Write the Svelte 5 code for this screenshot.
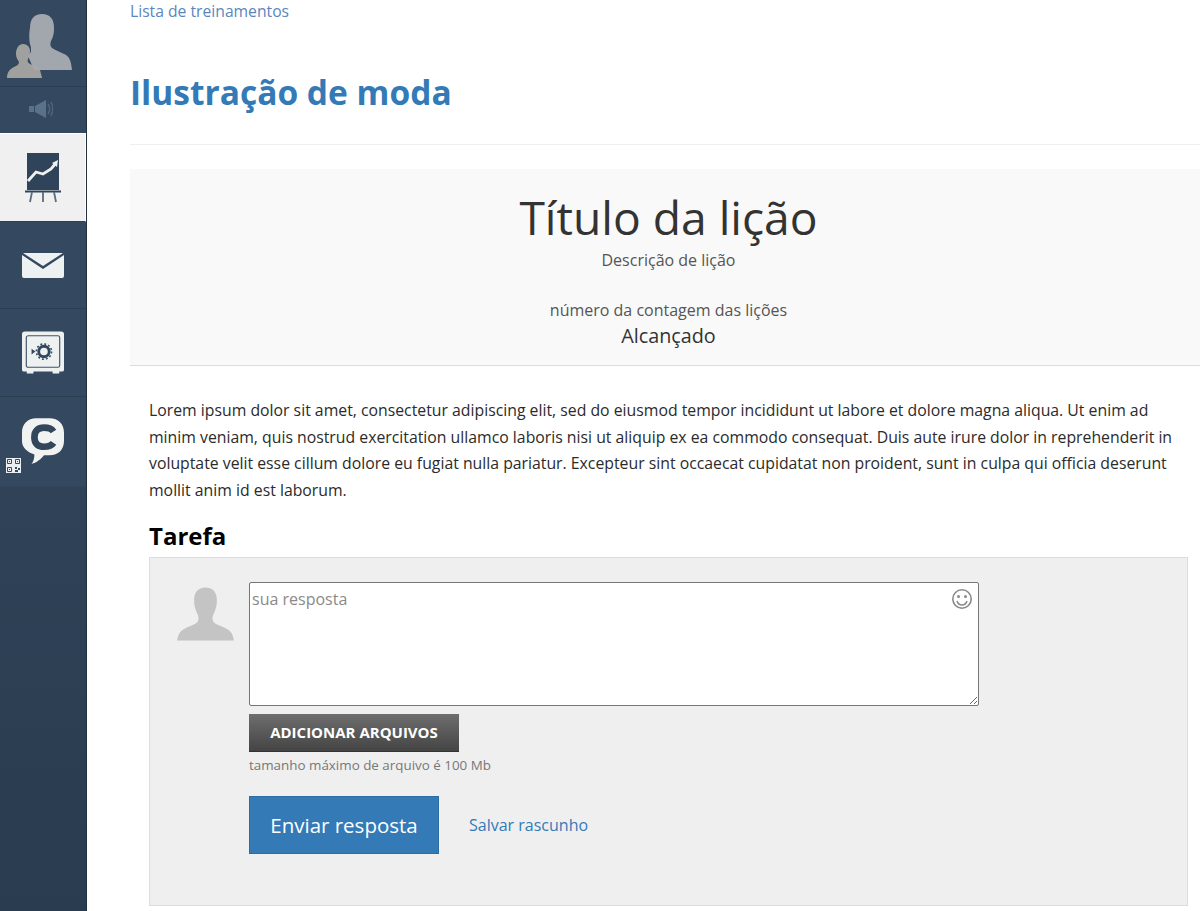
<script>
  let answer = $state("");
  const lesson = {
    course: "Ilustração de moda",
    title: "Título da lição",
    description: "Descrição de lição",
    countLabel: "número da contagem das lições",
    status: "Alcançado",
  };
</script>

<div class="page">
  <nav class="side">
    <div class="item avatar">
      <svg width="86" height="86" viewBox="0 0 86 86">
        <path fill="#a2a7ad" d="M30 28c0-9 4-14 12-14s12 5 12 14c0 6-1 9-3 13-1 3-1 5 1 7 3 2 8 4 12 6 5 2 7 6 8 16H34l-6-14c1-2 3-3 3-5 0-3 0-4-1-7-1-4-1-11 0-16z"/>
        <path fill="#a9a9a4" fill-opacity=".92" d="M23 44c4 0 7 3 7 7 0 3-1 6-2 8-1 2 0 4 2 5 4 2 8 3 10 6l2 8H7c0-6 3-9 7-11 3-1 5-3 5-5-1-2-3-4-3-8 0-6 3-10 7-10z"/>
      </svg>
    </div>
    <div class="item sound">
      <svg width="30" height="22" viewBox="0 0 30 22">
        <path fill="#5a718a" d="M1 8h5v6H1zM7 8l11-6v18L7 14z"/>
        <path fill="none" stroke="#4f667f" stroke-width="1.500" d="M20 6c2 3 2 7 0 10M23 4c2 4 2 10 0 14"/>
      </svg>
    </div>
    <div class="item active">
      <svg width="36" height="52" viewBox="0 0 36 52">
        <rect x="2" y="1" width="32" height="37" fill="#2f445a"/>
        <path fill="none" stroke="#f0f0f0" stroke-width="2.800" d="M3 29l8-9 7 2 8-5 5-6"/>
        <path fill="#f0f0f0" d="M33 8l-1 7-5-4z"/>
        <path fill="none" stroke="#2f445a" stroke-width="2" d="M0 39.500h36"/>
        <path fill="none" stroke="#5c6c7c" stroke-width="1.800" d="M7 40l-2 10M18 40v10M29 40l2 10"/>
      </svg>
    </div>
    <div class="item">
      <svg width="42" height="26" viewBox="0 0 42 26">
        <path fill="#eef1f2" d="M1 1h40L21 14z"/>
        <path fill="#eef1f2" d="M0 3l21 14L42 3v21a2 2 0 0 1-2 2H2a2 2 0 0 1-2-2z"/>
      </svg>
    </div>
    <div class="item safe">
      <svg width="42" height="43" viewBox="0 0 44 44">
        <path fill="#eef1f2" d="M3 0h38a3 3 0 0 1 3 3v37a2 2 0 0 1-2 2h-3v2h-7v-2H12v2H5v-2H2a2 2 0 0 1-2-2V3a3 3 0 0 1 3-3z"/>
        <rect x="4.500" y="4.500" width="35" height="33" rx="2" fill="#eef1f2" stroke="#3f5368" stroke-width="1.200"/>
        <circle cx="23" cy="21" r="5.500" fill="none" stroke="#33475c" stroke-width="3"/>
        <circle cx="23" cy="21" r="8" fill="none" stroke="#33475c" stroke-width="1.600" stroke-dasharray="2 2.200"/>
        <path fill="#33475c" d="M10 18l4 3-4 3z"/>
      </svg>
    </div>
    <div class="item chat">
      <svg width="42" height="48" viewBox="0 0 44 50">
        <path fill="#f1f3f3" fill-rule="evenodd" d="M15 0h14c9 0 15 6 15 15v9c0 9-6 15-15 15h-6c-3 4-8 8-13 9 2-3 3-6 3-10C6 36 0 31 0 24v-9C0 6 6 0 15 0z"/>
        <path fill="none" stroke="#33475c" stroke-width="7" d="M33 14c-2-3-5-4-10-4-6 0-10 3-10 10s4 10 10 10c5 0 8-1 10-4"/>
      </svg>
      <svg class="qr" width="15" height="15" viewBox="0 0 15 15">
        <rect width="15" height="15" fill="#e8eef2"/>
        <path fill="none" stroke="#34495f" stroke-width="1" d="M1.500 1.500h4v4h-4zM9.500 1.500h4v4h-4zM1.500 9.500h4v4h-4z"/>
        <path fill="#34495f" d="M3 3h1v1H3zM11 3h1v1h-1zM3 11h1v1H3zM9 9h2v2H9zM12 10h2v2h-2zM9 12h3v2H9z"/>
      </svg>
    </div>
  </nav>

  <main>
    <a class="crumb" href="#lista">Lista de treinamentos</a>
    <h1>{lesson.course}</h1>

    <header class="lesson">
      <h2>{lesson.title}</h2>
      <p class="desc">{lesson.description}</p>
      <p class="count">{lesson.countLabel}</p>
      <p class="status">{lesson.status}</p>
    </header>

    <section class="body">
      <p class="text">Lorem ipsum dolor sit amet, consectetur adipiscing elit, sed do eiusmod tempor incididunt ut labore et dolore magna aliqua. Ut enim ad minim veniam, quis nostrud exercitation ullamco laboris nisi ut aliquip ex ea commodo consequat. Duis aute irure dolor in reprehenderit in voluptate velit esse cillum dolore eu fugiat nulla pariatur. Excepteur sint occaecat cupidatat non proident, sunt in culpa qui officia deserunt mollit anim id est laborum.</p>
      <h3>Tarefa</h3>

      <div class="task">
        <svg class="person" width="57" height="56" viewBox="0 0 60 56">
          <path fill="#c4c4c4" d="M18 14C18 5 22 0 30 0s12 5 12 14c0 6-2 11-4 15-1 3-1 6 1 8 3 3 9 4 14 7 4 2 6 6 7 12H0c1-6 3-10 7-12 5-3 11-4 14-7 2-2 2-5 1-8-2-4-4-9-4-15z"/>
        </svg>
        <div class="form">
          <div class="area">
            <textarea bind:value={answer} placeholder="sua resposta"></textarea>
            <svg class="smile" width="22" height="22" viewBox="0 0 22 22">
              <circle cx="11" cy="11" r="9.200" fill="none" stroke="#8a8a8a" stroke-width="1.600"/>
              <circle cx="7.500" cy="8.500" r="1.500" fill="#8a8a8a"/>
              <circle cx="14.500" cy="8.500" r="1.500" fill="#8a8a8a"/>
              <path fill="none" stroke="#8a8a8a" stroke-width="1.500" d="M6 13c1 3 3 4 5 4s4-1 5-4"/>
            </svg>
          </div>
          <button class="files">ADICIONAR ARQUIVOS</button>
          <p class="hint">tamanho máximo de arquivo é 100 Mb</p>
          <div class="actions">
            <button class="send">Enviar resposta</button>
            <a class="draft" href="#rascunho">Salvar rascunho</a>
          </div>
        </div>
      </div>
    </section>
  </main>
</div>

<style>
  :global(body) {
    font-family: "Open Sans", "Lato", sans-serif;
    color: #333;
    background: #fff;
  }
  .page {
    display: flex;
    min-height: 911px;
    height: 911px;
    overflow: hidden;
  }
  .side {
    width: 86px;
    flex: none;
    border-right: 1px solid #22303f;
    background: linear-gradient(#34495f 0, #34495f 486px, #2f4257 487px, #2a3c4f 100%);
    display: flex;
    flex-direction: column;
  }
  .item {
    height: 87px;
    display: flex;
    align-items: center;
    justify-content: center;
    border-bottom: 1px solid #2c3e50;
    position: relative;
    box-sizing: border-box;
  }
  .avatar {
    align-items: flex-start;
    justify-content: flex-start;
    overflow: hidden;
  }
  .sound {
    height: 46px;
    border-bottom: 0;
    padding-bottom: 2px;
  }
  .active {
    height: 89px;
    background: #f0f0f0;
    border-top: 1px solid #fff;
    border-right: 1px solid #fff;
    border-bottom: 1px solid #2c3e50;
  }
  .safe {
    height: 88px;
  }
  .chat {
    border-bottom: 0;
    height: 89px;
    align-items: flex-start;
    padding-top: 21px;
  }
  .qr {
    position: absolute;
    left: 6px;
    top: 61px;
  }
  main {
    flex: 1;
    min-width: 0;
    padding-left: 43px;
  }
  .crumb {
    display: block;
    font-size: 15.700px;
    line-height: 22px;
    color: #5a86bd;
    text-decoration: none;
  }
  h1 {
    margin: 0;
    padding: 48px 0 30px;
    font-size: 33.500px;
    line-height: 44px;
    font-weight: 700;
    color: #337ab7;
    border-bottom: 1px solid #eee;
  }
  .lesson {
    margin-top: 24px;
    height: 197px;
    box-sizing: border-box;
    background: #f9f9f9;
    border-bottom: 1px solid #ddd;
    text-align: center;
    padding: 22.500px 0 0 7px;
  }
  h2 {
    margin: 0;
    font-size: 46.200px;
    line-height: 52px;
    font-weight: 400;
    color: #333;
  }
  .lesson p {
    margin: 0;
  }
  .desc {
    font-size: 16px;
    line-height: 22px;
    margin-top: 5.500px !important;
    color: #555;
  }
  .count {
    font-size: 16px;
    line-height: 22px;
    margin-top: 28px !important;
    color: #555;
  }
  .status {
    font-size: 19.800px;
    line-height: 30px;
    color: #333;
  }
  .body {
    padding: 31px 12px 0 19px;
  }
  .text {
    margin: 0;
    font-size: 15.800px;
    line-height: 26.670px;
    color: #2b2b2b;
  }
  h3 {
    margin: 17px 0 6px;
    font-size: 24px;
    line-height: 30px;
    font-weight: 700;
    color: #000;
  }
  .task {
    box-sizing: border-box;
    height: 349px;
    background: #efefef;
    border: 1px solid #ddd;
    padding: 24px 0 0 27px;
    display: flex;
    gap: 15px;
  }
  .person {
    margin-top: 4px;
    flex: none;
  }
  .form {
    width: 730px;
  }
  .area {
    position: relative;
    height: 124px;
  }
  textarea {
    display: block;
    width: 100%;
    height: 124px;
    box-sizing: border-box;
    border: 1px solid #767676;
    border-radius: 2px;
    padding: 4px 2px;
    font: 16px/24px "Open Sans", sans-serif;
    color: #333;
    background: #fff;
    outline: none;
  }
  textarea::placeholder {
    color: #8a8a8a;
  }
  .smile {
    position: absolute;
    right: 6px;
    top: 6px;
  }
  button {
    font-family: inherit;
    border: 0;
    cursor: pointer;
    display: block;
  }
  .files {
    margin-top: 8px;
    width: 210px;
    height: 38px;
    background: linear-gradient(#6e6e6e, #444);
    color: #fff;
    font-size: 15px;
    font-weight: 700;
    border-bottom: 1px solid #333;
    padding: 0;
  }
  .hint {
    margin: 3px 0 0;
    font-size: 13.400px;
    line-height: 20px;
    color: #777;
  }
  .actions {
    margin-top: 21px;
    display: flex;
    align-items: center;
    gap: 30px;
  }
  .send {
    width: 190px;
    height: 58px;
    background: #337ab7;
    border: 1px solid #2e6da4;
    color: #fff;
    font-size: 20.500px;
    padding: 0;
  }
  .draft {
    font-size: 16px;
    color: #337ab7;
    text-decoration: none;
  }
</style>
